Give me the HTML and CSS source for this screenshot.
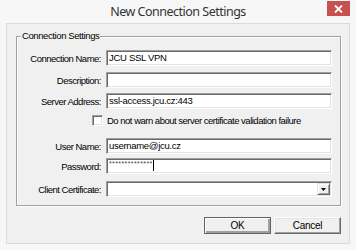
FILE: index.html
```html
<!DOCTYPE html>
<html>
  <head>
    <title>New Connection Settings</title>
    <link rel="stylesheet" href="styles.css">
  </head>
  <body>
    <div class="window">
      <div class="titlebar">
        <span class="title">New Connection Settings</span>
        <button class="close" title="Close">
          <svg width="9" height="8" viewBox="0 0 9 8">
            <path d="M1 0.5 L8 7.5 M8 0.5 L1 7.5" stroke="#fff" stroke-width="1.8" />
          </svg>
        </button>
      </div>

      <div class="client">
        <div class="group">
          <span class="legend">Connection Settings</span>
          <div class="rows">
            <div class="row r1">
              <label>Connection Name:</label>
              <div class="field">JCU SSL VPN</div>
            </div>
            <div class="row r2">
              <label>Description:</label>
              <div class="field"></div>
            </div>
            <div class="row r3">
              <label>Server Address:</label>
              <div class="field">ssl-access.jcu.cz:443</div>
            </div>
            <div class="row check-row">
              <span class="checkbox"></span>
              <span class="check-text">Do not warn about server certificate validation failure</span>
            </div>
            <div class="row r5">
              <label>User Name:</label>
              <div class="field">username@jcu.cz</div>
            </div>
            <div class="row r6">
              <label>Password:</label>
              <div class="field password"><span class="stars">**************</span><span class="caret"></span></div>
            </div>
            <div class="row r7">
              <label>Client Certificate:</label>
              <div class="field combo">
                <span class="combo-value"></span>
                <span class="combo-btn">
                  <svg width="5" height="3" viewBox="0 0 5 3"><path d="M0 0 H5 L2.5 3 Z" fill="#000" /></svg>
                </span>
              </div>
            </div>
          </div>
        </div>

        <div class="buttons">
          <button class="btn default">OK</button>
          <button class="btn">Cancel</button>
        </div>
      </div>
    </div>
  </body>
</html>
```

FILE: styles.css
```css
body {
  margin: 0;
  background-color: #f7f7f7;
  font-family: "Liberation Sans", Arial, sans-serif;
}
.window {
  width: 356px;
  height: 250px;
  background-color: #f7f7f7;
  display: flex;
  flex-direction: column;
}
.titlebar {
  height: 23px;
  display: grid;
  grid-template-columns: 1fr auto 1fr;
  align-items: start;
}
.title {
  grid-column: 2;
  font-family: "Noto Sans", sans-serif;
  font-size: 12.5px;
  letter-spacing: -0.5px;
  line-height: 24px;
  color: #333;
}
.close {
  grid-column: 3;
  justify-self: end;
  width: 23px;
  height: 15px;
  margin: 1px 6px 0 0;
  padding: 0;
  border: none;
  background-color: #c75050;
  display: flex;
  align-items: center;
  justify-content: center;
}
.client {
  margin: 0 6px;
  height: 221px;
  box-sizing: border-box;
  background-color: #f0f0f0;
  border: 1px solid #dadada;
  padding: 12px 8px 0 9px;
}
.group {
  height: 170px;
  box-sizing: border-box;
  border: 1px solid #a0a0a0;
  box-shadow: inset 1px 1px #fff, 1px 1px #fff;
}
.legend {
  display: block;
  width: fit-content;
  height: 12px;
  line-height: 12px;
  margin: -7px 0 0 4px;
  padding: 0 1px;
  background-color: #f0f0f0;
  font-size: 9.5px;
  letter-spacing: -0.4px;
  color: #000;
}
.rows {
  padding-top: 8px;
}
.row {
  display: flex;
  align-items: center;
  height: 16px;
  font-size: 9.5px;
  letter-spacing: -0.5px;
}
.row label {
  width: 84px;
  text-align: right;
  margin-right: 5px;
}
.r2 { margin-top: 6px; }
.r3 { margin-top: 5px; }
.check-row { margin-top: 5px; height: 13px; }
.r5 { margin-top: 11px; }
.r6 { margin-top: 4px; }
.r7 { margin-top: 7px; }
.field {
  width: 226px;
  height: 16px;
  box-sizing: border-box;
  background-color: #fff;
  border: 1px solid;
  border-color: #a0a0a0 #fff #fff #a0a0a0;
  box-shadow: inset 1px 1px #696969, inset -1px -1px #e3e3e3;
  padding: 0 2px;
  line-height: 14px;
  font-size: 9.5px;
  letter-spacing: -0.3px;
  white-space: nowrap;
  overflow: hidden;
}
.password {
  display: flex;
  align-items: flex-start;
}
.stars {
  font-size: 7px;
  line-height: 9px;
  letter-spacing: 0.4px;
  color: #444;
}
.caret {
  width: 1px;
  height: 11px;
  margin: 1px 0 0 0;
  background-color: #000;
}
.combo {
  display: flex;
  justify-content: flex-end;
  align-items: center;
  padding: 0 1px;
}
.combo-btn {
  width: 13px;
  height: 12px;
  box-sizing: border-box;
  background-color: #f0f0f0;
  border: 1px solid;
  border-color: #e3e3e3 #696969 #696969 #e3e3e3;
  box-shadow: inset 1px 1px #fff, inset -1px -1px #a0a0a0;
  display: flex;
  align-items: center;
  justify-content: center;
}
.checkbox {
  width: 11px;
  height: 11px;
  box-sizing: border-box;
  margin-left: 75px;
  margin-right: 4px;
  background-color: #fff;
  border: 1px solid;
  border-color: #a0a0a0 #fff #fff #a0a0a0;
  box-shadow: inset 1px 1px #696969, inset -1px -1px #e3e3e3;
}
.buttons {
  display: flex;
  justify-content: flex-end;
  gap: 3px;
  margin-top: 11px;
}
.btn {
  width: 67px;
  height: 17px;
  padding: 0;
  box-sizing: border-box;
  background-color: #f0f0f0;
  border: 1px solid;
  border-color: #fff #696969 #696969 #fff;
  box-shadow: inset -1px -1px #a0a0a0, inset 1px 1px #e3e3e3;
  font-family: "Liberation Sans", Arial, sans-serif;
  font-size: 10px;
  letter-spacing: -0.3px;
  color: #000;
}
.btn.default {
  border-color: #646464;
  box-shadow: inset 1px 1px #fff, inset -2px -2px #a0a0a0;
}
```
